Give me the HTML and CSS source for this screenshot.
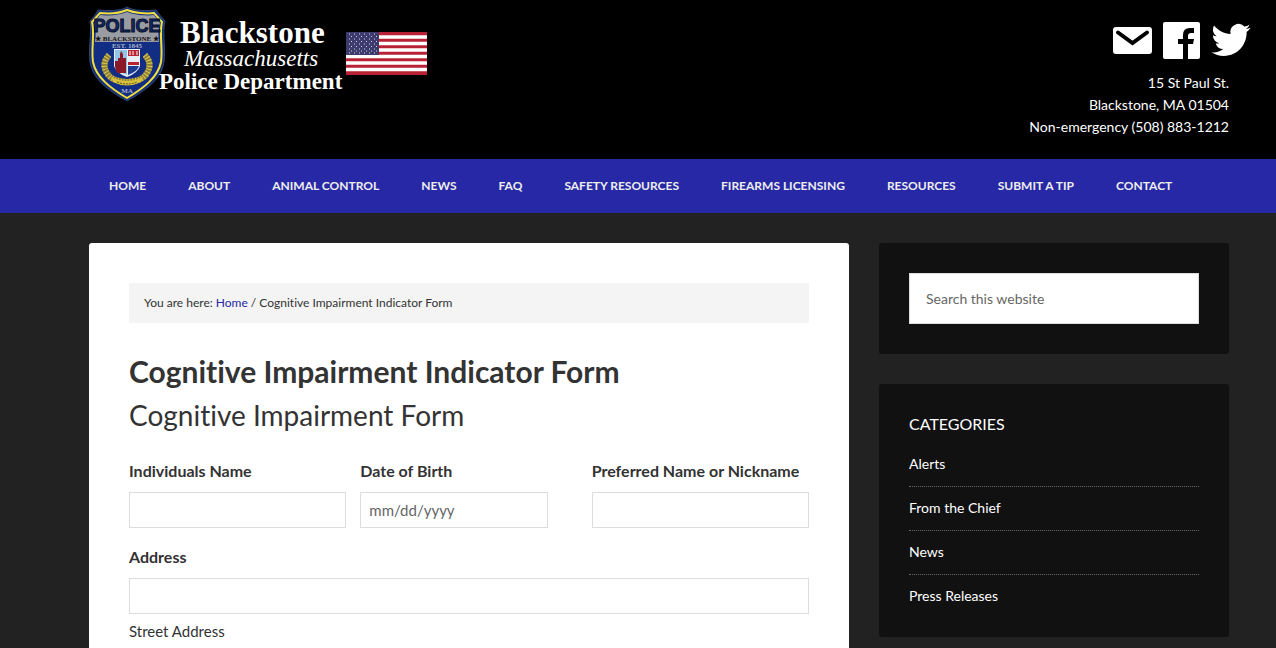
FILE: index.html
```html
<!DOCTYPE html>
<html lang="en">
<head>
  <meta charset="UTF-8">
  <meta name="viewport" content="width=device-width, initial-scale=1.0">
  <title>Cognitive Impairment Indicator Form</title>
  <link rel="stylesheet" href="styles.css">
</head>
<body>
  <header class="site-header">
    <a class="logo" href="#" aria-label="Blackstone Massachusetts Police Department">
      <svg width="340" height="98" viewBox="0 0 340 98">
        <!-- badge -->
        <path d="M38 1 C44 5 58 5 67 4 C70 8 73 12 76 15 C73 28 77 42 75 56 C72 74 57 84 38 95 C19 84 4 74 1 56 C-1 42 3 28 1 15 C4 12 7 8 9 4 C20 5 32 5 38 1Z" fill="#142f7c" stroke="#33466f" stroke-width="1"/>
        <path d="M38 4 C45 7 57 8 65 7 C68 10 70 13 73 16 C70 28 74 42 72 56 C69 71 55 82 38 92 C21 82 7 71 4 56 C2 42 6 28 3 16 C6 13 8 10 11 7 C20 8 31 7 38 4Z" fill="#112d84" stroke="#f2df39" stroke-width="2"/>
        <path d="M38 6 C45 9 57 10 65 9 L71 17 C69 23 69 29 70 36 H6 C7 29 7 23 5 17 L11 9 C20 10 31 9 38 6Z" fill="#9a9ca3"/>
        <text class="badge-police" x="38" y="26" text-anchor="middle">POLICE</text>
        <text class="badge-town" x="38" y="35" text-anchor="middle">★ BLACKSTONE ★</text>
        <text class="badge-small" x="38" y="42" text-anchor="middle">EST. 1845</text>
        <path d="M20 49 Q12 58 18 67 Q22 75 38 76 Q54 75 58 67 Q64 58 56 49" fill="none" stroke="#8f8238" stroke-width="6"/>
        <path d="M20 49 Q12 58 18 67 Q22 75 38 76 Q54 75 58 67 Q64 58 56 49" fill="none" stroke="#dcc84a" stroke-width="6" stroke-dasharray="1 2"/>
        <path d="M25 43 H51 V60 Q49 67 38 71 Q27 67 25 60Z" fill="#e9eef5"/>
        <path d="M26 44 H38 V69 Q28 66 26 60Z" fill="#8fc6e6"/>
        <path d="M26 55 H29 V52 H31 V48 L32 45 L34 48 V52 H37 V67 H28 Q26 63 26 60Z" fill="#8a1a2a"/>
        <path d="M39 44 H50 V50 H39Z M39 56 H50 V59 H39Z" fill="#b92434"/>
        <path d="M39 60 H50 Q48 66 39 69Z" fill="#1c3d91"/>
        <path d="M41 45 V49 M44 45 V49 M48 45 V49" stroke="#fff" stroke-width="1"/>
        <path d="M22 71 Q38 79 54 71 L52 76 Q38 83 24 76Z" fill="#d8c13d"/>
        <path d="M28 76 Q38 80 48 76" fill="none" stroke="#57501c" stroke-width="1" stroke-dasharray="2 1"/>
        <text class="badge-small" x="38" y="87" text-anchor="middle">MA</text>
        <!-- department name -->
        <text class="logo-town" x="91" y="37">Blackstone</text>
        <text class="logo-state" x="95" y="60">Massachusetts</text>
        <text class="logo-dept" x="70" y="83">Police Department</text>
        <!-- flag -->
        <rect x="257" y="26" width="81" height="43" fill="#b92235"/>
        <path d="M257 31H338M257 37.500H338M257 44H338M257 50.500H338M257 57H338M257 63.500H338" stroke="#fff" stroke-width="3.300"/>
        <rect x="257" y="26" width="33" height="23" fill="#3c3b6e"/>
        <path d="M260 28H289M260 33H289M260 38H289M260 43H289M260 47H289" stroke="#d6d6e4" stroke-width="1" stroke-dasharray="1 4"/>
        <path d="M262 30.500H288M262 35.500H288M262 40.500H288M262 45H288" stroke="#d6d6e4" stroke-width="1" stroke-dasharray="1 4"/>
      </svg>
    </a>
    <div class="header-contact">
      <div class="social">
        <a href="#" aria-label="Email">
          <svg width="40" height="36" viewBox="0 0 40 36">
            <rect x="1" y="5" width="39" height="27" rx="3" fill="#fff"/>
            <path d="M6 10.500 L20.500 21 L35 10.500" fill="none" stroke="#000" stroke-width="4" stroke-linecap="round"/>
          </svg>
        </a>
        <a href="#" aria-label="Facebook">
          <svg width="37" height="37" viewBox="0 0 37 37">
            <rect width="37" height="37" rx="2" fill="#fff"/>
            <path d="M20 37 V22 H15 V17 H20 V13 Q20 6 27 6 H31 V11 H28 Q25 11 25 14 V17 H31 L30 22 H25 V37Z" fill="#000"/>
          </svg>
        </a>
        <a href="#" aria-label="Twitter">
          <svg width="40" height="36" viewBox="0 1 24 22">
            <path fill="#fff" d="M23.950 4.570a10 10 0 0 1-2.820.770 4.960 4.960 0 0 0 2.160-2.720c-.950.550-2 .960-3.130 1.180a4.920 4.920 0 0 0-8.380 4.480C7.690 8.100 4.070 6.130 1.640 3.160a4.920 4.920 0 0 0 1.520 6.570 4.900 4.900 0 0 1-2.230-.610v.060a4.920 4.920 0 0 0 3.950 4.830 5 5 0 0 1-2.210.080 4.940 4.940 0 0 0 4.600 3.420A9.870 9.870 0 0 1 0 19.540a13.990 13.990 0 0 0 7.550 2.210c9.050 0 14-7.500 14-13.980 0-.210 0-.420-.020-.630a9.940 9.940 0 0 0 2.460-2.550z"/>
          </svg>
        </a>
      </div>
      <p class="address">15 St Paul St.<br>Blackstone, MA 01504<br>Non-emergency (508) 883-1212</p>
    </div>
  </header>

  <nav class="site-nav">
    <a href="#">Home</a>
    <a href="#">About</a>
    <a href="#">Animal Control</a>
    <a href="#">News</a>
    <a href="#">FAQ</a>
    <a href="#">Safety Resources</a>
    <a href="#">Firearms Licensing</a>
    <a href="#">Resources</a>
    <a href="#">Submit a Tip</a>
    <a href="#">Contact</a>
  </nav>

  <div class="site-inner">
    <main class="content">
      <div class="breadcrumb">You are here: <a href="#">Home</a> / Cognitive Impairment Indicator Form</div>
      <h1>Cognitive Impairment Indicator Form</h1>
      <h2>Cognitive Impairment Form</h2>
      <form class="form">
        <div class="field">
          <label for="name">Individuals Name</label>
          <input type="text" id="name">
        </div>
        <div class="field">
          <label for="birth">Date of Birth</label>
          <input class="date" type="text" id="birth" placeholder="mm/dd/yyyy">
        </div>
        <div class="field">
          <label for="nickname">Preferred Name or Nickname</label>
          <input type="text" id="nickname">
        </div>
        <div class="field full">
          <label for="street">Address</label>
          <input type="text" id="street" aria-describedby="street-note">
          <span class="note" id="street-note">Street Address</span>
        </div>
      </form>
    </main>

    <aside class="sidebar">
      <section class="widget">
        <form>
          <input class="search" type="search" placeholder="Search this website" aria-label="Search this website">
        </form>
      </section>
      <section class="widget">
        <h4>Categories</h4>
        <ul>
          <li><a href="#">Alerts</a></li>
          <li><a href="#">From the Chief</a></li>
          <li><a href="#">News</a></li>
          <li><a href="#">Press Releases</a></li>
        </ul>
      </section>
    </aside>
  </div>
</body>
</html>
```
FILE: styles.css
```css
* {
  box-sizing: border-box;
}

body {
  margin: 0;
  background-color: #222;
  color: #333;
  font-family: Lato, sans-serif;
  font-size: 15px;
  font-variant-ligatures: none;
}

a {
  color: #2728a5;
  text-decoration: none;
}

.site-header {
  display: flex;
  justify-content: space-between;
  background-color: #000;
  padding: 6px 25px 21px 89px;
}

.logo svg,
.social svg {
  display: block;
}

.badge-police {
  font: bold 18px "Liberation Sans", sans-serif;
  fill: #122c75;
  stroke: #080d1c;
  stroke-width: 1px;
}

.badge-town {
  font: bold 7px "Liberation Serif", serif;
  fill: #111;
}

.badge-small {
  font: bold 7px "Liberation Serif", serif;
  fill: #aab0c4;
}

.logo-town {
  font: bold 31px "Liberation Serif", serif;
  fill: #fff;
}

.logo-state {
  font: italic 23px "Liberation Serif", serif;
  fill: #fff;
}

.logo-dept {
  font: bold 23px "Liberation Serif", serif;
  fill: #fff;
}

.header-contact {
  padding-top: 16px;
}

.social {
  display: flex;
  justify-content: flex-end;
  gap: 11px;
}

.address {
  margin: 13px 22px 0 0;
  color: #fff;
  font-size: 14px;
  line-height: 22px;
  text-align: right;
}

.site-nav {
  display: flex;
  background-color: #2728a5;
  padding: 0 47px 0 88px;
}

.site-nav a {
  padding: 0 21px;
  color: #eee;
  font-size: 12px;
  font-weight: bold;
  line-height: 54px;
  text-transform: uppercase;
  white-space: nowrap;
}

.site-inner {
  display: grid;
  grid-template-columns: 1fr 350px;
  gap: 30px;
  padding: 30px 47px 0 89px;
}

.content {
  background-color: #fff;
  border-radius: 3px;
  padding: 40px;
}

.breadcrumb {
  background-color: #f4f4f4;
  margin-bottom: 29px;
  padding: 0 15px;
  font-size: 12px;
  line-height: 40px;
}

h1,
h2 {
  margin: 0;
  font-size: 30px;
  line-height: 38px;
}

h2 {
  margin-top: 6px;
  font-size: 28px;
  font-weight: normal;
}

.form {
  display: grid;
  grid-template-columns: repeat(3, 1fr);
  gap: 16px 14px;
  margin-top: 24px;
}

.full {
  grid-column: 1 / -1;
}

label {
  display: block;
  margin-bottom: 8px;
  font-size: 16px;
  font-weight: bold;
  line-height: 26px;
}

input {
  display: block;
  width: 100%;
  height: 36px;
  border: 1px solid #ddd;
  padding: 0 8px;
  background-color: #fff;
  font-family: Lato, sans-serif;
  font-size: 15px;
}

input::placeholder {
  color: #666;
}

.date {
  max-width: 188px;
}

.note {
  display: block;
  margin-top: 4px;
  line-height: 26px;
}

.widget {
  background-color: #111;
  border-radius: 3px;
  margin-bottom: 30px;
  padding: 30px;
}

.search {
  height: 51px;
  padding: 0 16px;
  font-size: 14px;
}

h4 {
  margin: 0 0 19px;
  color: #fff;
  font-size: 16px;
  font-weight: normal;
  line-height: 20px;
  text-transform: uppercase;
}

ul {
  list-style-type: none;
  margin: 0;
  padding: 0;
}

li {
  border-bottom: 1px dotted #666;
  margin-bottom: 10px;
  padding-bottom: 11px;
  font-size: 14px;
  line-height: 22px;
}

li:last-child {
  border-bottom: none;
  margin-bottom: 0;
  padding-bottom: 0;
}

li a {
  color: #fff;
}
```
